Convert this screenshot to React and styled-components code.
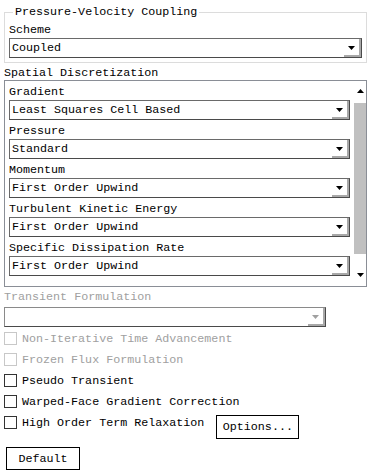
import React from "react";
import styled, { createGlobalStyle } from "styled-components";

const Global = createGlobalStyle`
  html, body { margin: 0; padding: 0; background: #fff; }
  body { font-family: "Liberation Mono", "DejaVu Sans Mono", monospace; font-size: 11.7px; color: #000; }
  * { box-sizing: border-box; }
`;

const Page = styled.div`
  width: 373px;
  padding-left: 4px;
  display: flex;
  flex-direction: column;
  align-items: flex-start;
`;

const GroupBox = styled.div`
  position: relative;
  margin-top: 12px;
  width: 363px;
  border: 1px solid #dcdcdc;
  padding: 10px 4px 4px 4px;
  display: flex;
  flex-direction: column;
`;

const Legend = styled.span`
  position: absolute;
  top: -8px;
  left: 8px;
  padding: 0 2px;
  background: #fff;
  line-height: 14px;
  white-space: nowrap;
`;

const Label = styled.div`
  line-height: 14px;
  height: 14px;
  white-space: nowrap;
  color: ${(p) => (p.$disabled ? "#a0a0a0" : "#000")};
  margin-top: ${(p) => p.$mt || 0}px;
  margin-bottom: ${(p) => p.$mb || 0}px;
`;

const ComboBox = styled.div`
  position: relative;
  display: flex;
  align-items: center;
  width: ${(p) => p.$width || "100%"};
  height: 20px;
  border: 1px solid ${(p) => (p.$disabled ? "#8a8a8a" : "#6a6a6a")};
  border-right-color: ${(p) => (p.$disabled ? "#4a4a4a" : "#4a4a4a")};
  border-bottom-color: ${(p) => (p.$disabled ? "#4a4a4a" : "#4a4a4a")};
  background: #fff;
  margin-top: ${(p) => p.$mt || 0}px;
`;

const ComboText = styled.span`
  flex: 1;
  padding-left: 2px;
  line-height: 18px;
  white-space: nowrap;
  overflow: hidden;
`;

const ComboButton = styled.span`
  width: 17px;
  height: 18px;
  display: flex;
  align-items: center;
  justify-content: center;
  border-right: 2px solid #a8a8a8;
  border-bottom: 2px solid #a8a8a8;
  padding-top: 2px;
`;

const Arrow = ({ color = "#000", up = false }) => (
  <svg width="7" height="4" viewBox="0 0 7 4" style={{ display: "block" }}>
    {up ? (
      <polygon points="3.5,0 7,4 0,4" fill={color} />
    ) : (
      <polygon points="0,0 7,0 3.5,4" fill={color} />
    )}
  </svg>
);

const Combo = ({ value, disabled, width, mt }) => (
  <ComboBox $disabled={disabled} $width={width} $mt={mt}>
    <ComboText>{value}</ComboText>
    <ComboButton>
      <Arrow color={disabled ? "#a0a0a0" : "#000"} />
    </ComboButton>
  </ComboBox>
);

const SectionTitle = styled.div`
  margin-top: 3px;
  line-height: 14px;
  height: 14px;
  white-space: nowrap;
`;

const ScrollBox = styled.div`
  width: 363px;
  border: 1px solid #8a8e96;
  display: flex;
`;

const ScrollContent = styled.div`
  flex: 1;
  padding: 0 4px 10px 4px;
  display: flex;
  flex-direction: column;
`;

const Item = styled.div`
  display: flex;
  flex-direction: column;
`;

const ScrollBar = styled.div`
  width: 12px;
  display: flex;
  flex-direction: column;
  align-items: stretch;
`;

const ScrollArrow = styled.div`
  height: ${(p) => p.$h}px;
  display: flex;
  justify-content: center;
  align-items: ${(p) => (p.$up ? "flex-start" : "flex-end")};
  padding: ${(p) => (p.$up ? "8px 0 0 0" : "0 0 9px 0")};
`;

const Thumb = styled.div`
  height: 151px;
  background: #c0c0c0;
`;

const Track = styled.div`
  flex: 1;
`;

const CheckRow = styled.div`
  display: flex;
  align-items: flex-start;
  margin-top: ${(p) => p.$mt || 0}px;
`;

const CheckLabel = styled.label`
  display: flex;
  align-items: center;
  gap: 5px;
  height: 21px;
  white-space: nowrap;
  color: ${(p) => (p.$disabled ? "#a0a0a0" : "#000")};
`;

const Box = styled.span`
  width: 13px;
  height: 13px;
  border: 1px solid ${(p) => (p.$disabled ? "#c8c8c8" : "#333")};
  background: #fff;
  display: inline-block;
`;

const Button = styled.button`
  font-family: inherit;
  font-size: inherit;
  color: #000;
  background: #fff;
  border: 1px solid #000;
  border-radius: 0;
  height: ${(p) => p.$h}px;
  width: ${(p) => p.$w}px;
  padding: 0;
  margin: ${(p) => p.$margin || 0};
  line-height: 14px;
  text-align: center;
  cursor: default;
`;

const Check = ({ children, disabled }) => (
  <CheckLabel $disabled={disabled}>
    <Box $disabled={disabled} />
    {children}
  </CheckLabel>
);

const items = [
  ["Gradient", "Least Squares Cell Based"],
  ["Pressure", "Standard"],
  ["Momentum", "First Order Upwind"],
  ["Turbulent Kinetic Energy", "First Order Upwind"],
  ["Specific Dissipation Rate", "First Order Upwind"],
];

export default function App() {
  return (
    <>
      <Global />
      <Page>
        <GroupBox>
          <Legend>Pressure-Velocity Coupling</Legend>
          <Label>Scheme</Label>
          <Combo value="Coupled" mt={1} />
        </GroupBox>

        <SectionTitle>Spatial Discretization</SectionTitle>
        <ScrollBox>
          <ScrollContent>
            {items.map(([label, value], i) => (
              <Item key={i}>
                <Label $mt={4} $mb={1}>{label}</Label>
                <Combo value={value} />
              </Item>
            ))}
          </ScrollContent>
          <ScrollBar>
            <ScrollArrow $up $h={22}>
              <Arrow up />
            </ScrollArrow>
            <Thumb />
            <Track />
            <ScrollArrow $h={14}>
              <Arrow />
            </ScrollArrow>
          </ScrollBar>
        </ScrollBox>

        <Label $disabled $mt={3}>Transient Formulation</Label>
        <Combo value="" disabled width="322px" mt={3} />

        <CheckRow $mt={1}>
          <Check disabled>Non-Iterative Time Advancement</Check>
        </CheckRow>
        <CheckRow>
          <Check disabled>Frozen Flux Formulation</Check>
        </CheckRow>
        <CheckRow>
          <Check>Pseudo Transient</Check>
        </CheckRow>
        <CheckRow>
          <Check>Warped-Face Gradient Correction</Check>
        </CheckRow>
        <CheckRow>
          <Check>High Order Term Relaxation</Check>
          <Button $w={83} $h={24} $margin="3px 0 0 12px">Options...</Button>
        </CheckRow>

        <Button $w={74} $h={23} $margin="8px 0 0 2px">Default</Button>
      </Page>
    </>
  );
}
